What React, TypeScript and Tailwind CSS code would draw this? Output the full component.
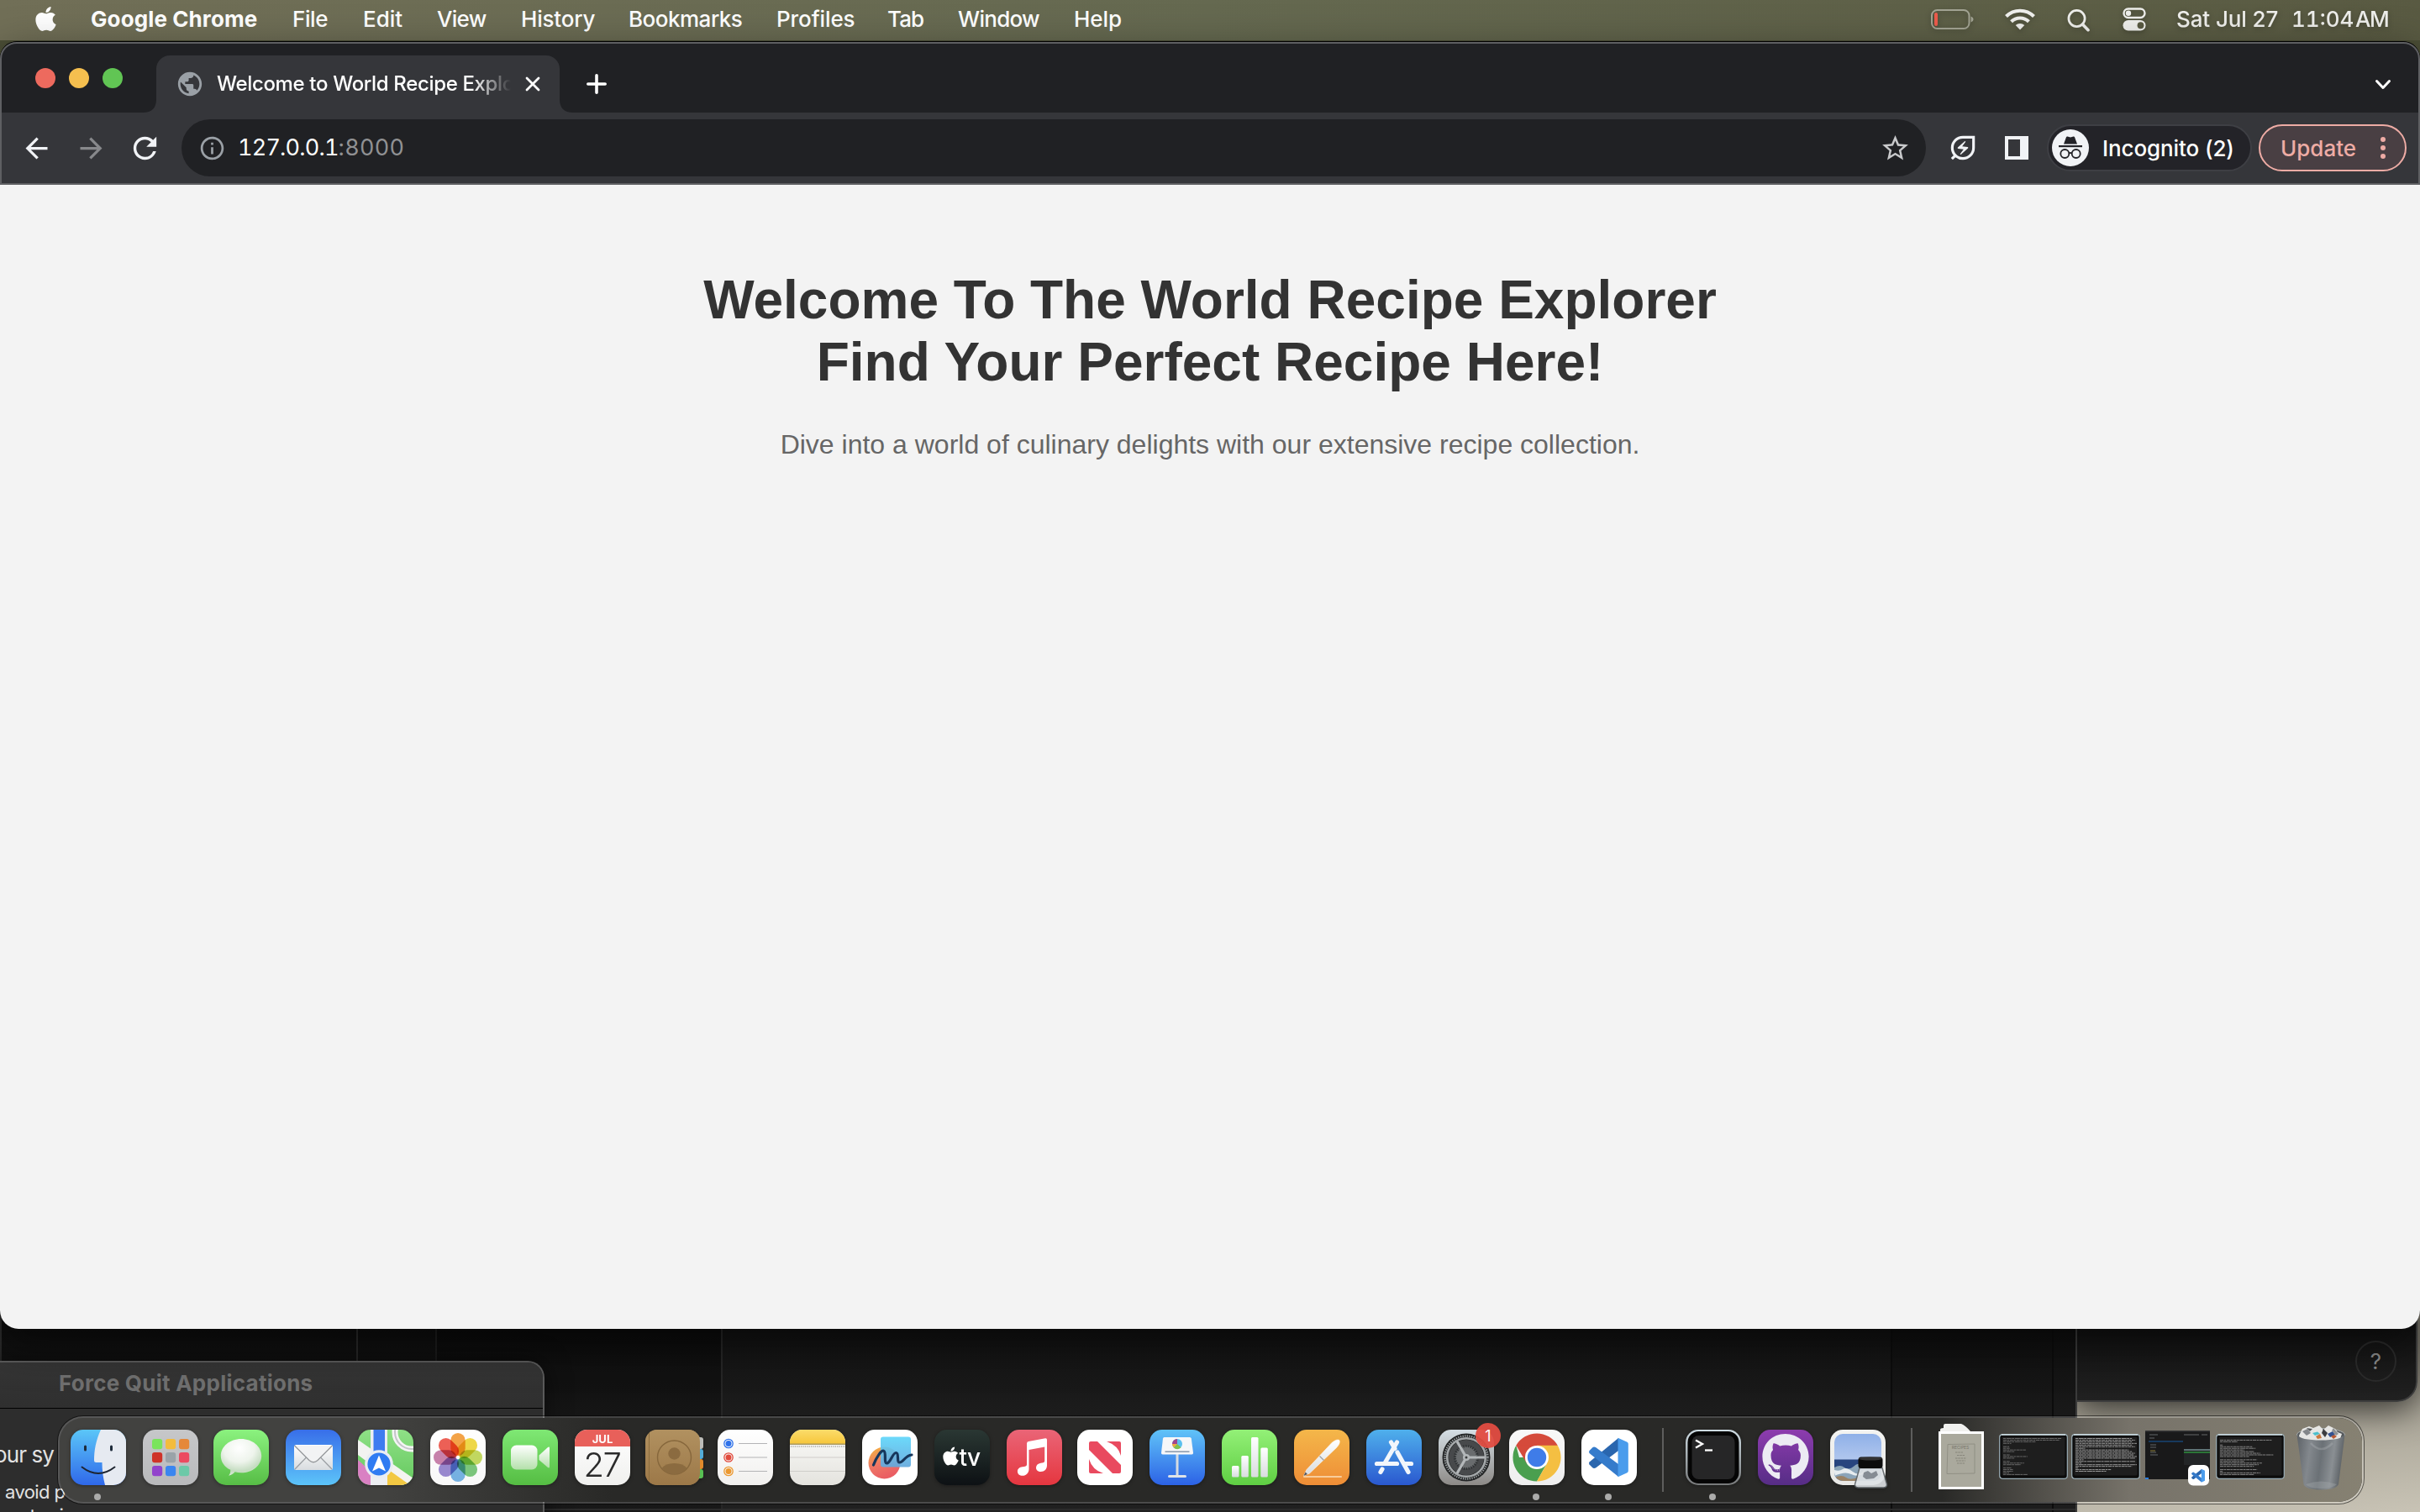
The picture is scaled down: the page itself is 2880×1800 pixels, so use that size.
import React from "react";
import { FaApple, FaGithub } from "react-icons/fa";
import {
  MdArrowBack,
  MdArrowForward,
  MdInfoOutline,
  MdOutlineEnergySavingsLeaf,
  MdPublic,
  MdRefresh,
  MdStarOutline,
} from "react-icons/md";

/* ---------- menu bar ---------- */

const menus = [
  { label: "File", cls: "w-[84px] tracking-[-0.4px]" },
  { label: "Edit", cls: "w-[88px] tracking-[0px]" },
  { label: "View", cls: "w-[100px] tracking-[-0.7px]" },
  { label: "History", cls: "w-[128px] tracking-[-0.2px]" },
  { label: "Bookmarks", cls: "w-[176px] tracking-[-0.5px]" },
  { label: "Profiles", cls: "w-[132px] tracking-[-0.1px]" },
  { label: "Tab", cls: "w-[84px] tracking-[-0.9px]" },
  { label: "Window", cls: "w-[138px] tracking-[-0.7px]" },
  { label: "Help", cls: "w-[80px] tracking-[-0.1px]" },
];

function MenuBar() {
  return (
    <div className="flex h-12 shrink-0 items-center bg-linear-to-r from-[#716f57] via-[#656950] to-[#595a42] pb-[3px] text-[26px] font-medium whitespace-nowrap text-white">
      <FaApple className="ml-[38px] size-[33px]" />
      <span className="ml-[37px] w-[240px] font-bold tracking-[0.1px]">Google Chrome</span>
      {menus.map((m) => (
        <span key={m.label} className={m.cls}>
          {m.label}
        </span>
      ))}
      <div className="ml-auto flex items-center text-[#efefec] [filter:drop-shadow(0_2px_3px_rgba(0,0,0,0.25))]">
        <svg className="h-[26px] w-[52px]" viewBox="0 0 52 26" fill="none">
          <rect x="1" y="2" width="44.500" height="22" rx="6.500" stroke="#a3a494" strokeWidth="2" />
          <rect x="4" y="5" width="4" height="16" rx="2" fill="#ee5c4c" />
          <path d="M47.500 9.500c4 1.500 4 5.500 0 7z" fill="#a3a494" />
        </svg>
        <svg className="ml-[36px] h-[26px] w-[36px]" viewBox="0 0 36 26" fill="none" stroke="currentColor" strokeWidth="4.200">
          <path d="M1.500 9.500a23.500 23.500 0 0 1 33 0" />
          <path d="M7.600 15.800a14.700 14.700 0 0 1 20.800 0" />
          <path d="M18 25.500l-5.300-5.400a7.500 7.500 0 0 1 10.600 0z" fill="currentColor" stroke="none" />
        </svg>
        <svg className="ml-[38px] h-[28px] w-[28px] translate-y-[1px]" viewBox="0 0 28 28" fill="none" stroke="currentColor">
          <circle cx="11.500" cy="12" r="9.600" strokeWidth="2.700" />
          <path d="M18.500 19l6.500 6.700" strokeWidth="3.600" strokeLinecap="round" />
        </svg>
        <svg className="ml-[38px] h-[28px] w-[28px]" viewBox="0 0 28 28" fill="none">
          <rect x="1.500" y="1.500" width="25" height="10.500" rx="5.250" stroke="currentColor" strokeWidth="2.400" />
          <circle cx="7" cy="6.750" r="3.200" fill="currentColor" />
          <rect x="0.500" y="15" width="27" height="12.500" rx="6.250" fill="currentColor" />
          <circle cx="21.500" cy="21.250" r="3.900" fill="#595a42" />
        </svg>
        <span className="ml-[36px] w-[137px] tracking-[-0.100px]">Sat Jul 27</span>
        <span className="w-[76px] tracking-[0px] tabular-nums">11:04</span>
        <span className="w-[77px] tracking-[-1.500px]">AM</span>
      </div>
    </div>
  );
}

/* ---------- browser window ---------- */

function IncognitoBadge() {
  return (
    <svg className="size-[44px]" viewBox="0 0 44 44">
      <circle cx="22" cy="22" r="22" fill="#f1f3f6" />
      <path d="M14 17.500l3-8.200q.4-1 1.500-.7l3.500.9 3.500-.9q1.100-.3 1.500.7l3 8.200z" fill="#232328" />
      <rect x="8" y="19" width="28" height="2.200" fill="#232328" />
      <g fill="none" stroke="#232328" strokeWidth="1.800">
        <circle cx="15.300" cy="29" r="5" />
        <circle cx="28.700" cy="29" r="5" />
        <path d="M20.300 28.600q1.700-1.200 3.400 0" />
      </g>
    </svg>
  );
}

function TabStrip() {
  return (
    <div className="flex h-[82px] items-end rounded-t-[18px] bg-[#202124]">
      <div className="mb-[29px] ml-[40px] flex gap-4">
        <span className="size-6 rounded-full bg-[#ed6a5e]" />
        <span className="size-6 rounded-full bg-[#f5bf4f]" />
        <span className="size-6 rounded-full bg-[#61c554]" />
      </div>
      <svg className="ml-[24px] h-4 w-4" viewBox="0 0 16 16">
        <path d="M16 0v16H0Q16 16 16 0z" fill="#35363a" />
      </svg>
      <div className="flex h-[68px] w-[480px] items-center rounded-t-[16px] bg-[#35363a] pl-[23px] text-white">
        <MdPublic className="size-[34px] text-[#9aa0a6]" />
        <span className="ml-[15px] w-[352px] overflow-hidden text-[24px] font-medium tracking-[-0.350px] whitespace-nowrap [mask-image:linear-gradient(to_right,black_305px,transparent_350px)]">
          Welcome to World Recipe Explorer
        </span>
        <svg className="ml-[15px] size-[18px]" viewBox="0 0 18 18" stroke="currentColor" strokeWidth="2.800" strokeLinecap="round">
          <path d="M2 2l14 14M16 2L2 16" />
        </svg>
      </div>
      <svg className="h-4 w-4" viewBox="0 0 16 16">
        <path d="M0 0v16h16Q0 16 0 0z" fill="#35363a" />
      </svg>
      <svg className="mb-[22px] ml-[16px] size-6" viewBox="0 0 24 24" stroke="white" strokeWidth="3.600" strokeLinecap="round">
        <path d="M12 1.800v20.400M1.800 12h20.400" />
      </svg>
      <svg className="mr-[32px] mb-[27px] ml-auto h-[13px] w-[20px]" viewBox="0 0 20 13" fill="none" stroke="white" strokeWidth="3" strokeLinecap="round" strokeLinejoin="round">
        <path d="M2.500 2.500l7.500 8 7.500-8" />
      </svg>
    </div>
  );
}

function Toolbar() {
  return (
    <div className="flex h-[84px] items-center bg-[#35363a] text-white">
      <MdArrowBack className="ml-[22px] size-[39px] text-[#f1f3f6]" />
      <MdArrowForward className="ml-[26px] size-[39px] text-[#87888b]" />
      <MdRefresh className="ml-[24px] size-[41px] text-[#f1f3f6]" />
      <div className="ml-[23px] flex h-[68px] w-[2076px] items-center rounded-full bg-[#202124]">
        <MdInfoOutline className="ml-[20px] size-[33px] text-[#9aa0a6]" />
        <span className="ml-[14px] flex items-baseline text-[27px] tabular-nums">
          <span className="tracking-[-0.800px]">127.0.0.1</span>
          <span className="tracking-[0.300px] text-[#909193]">:8000</span>
        </span>
        <MdStarOutline className="mr-[18px] ml-auto size-[37px] text-[#c8c9cb]" />
      </div>
      <MdOutlineEnergySavingsLeaf className="ml-[25px] size-[38px] text-[#f1f3f6]" />
      <svg className="ml-[31px] size-[28px]" viewBox="0 0 28 28">
        <path fill="#f1f3f6" fillRule="evenodd" d="M0 0h28v28H0zM4 4v20h14V4z" />
      </svg>
      <div className="ml-[22px] flex h-[56px] w-[244px] items-center rounded-full border-2 border-[#3e3f44] bg-[#232328] pl-[4px] text-[26px] font-medium">
        <IncognitoBadge />
        <span className="ml-[16px] tracking-[-0.100px] whitespace-nowrap">Incognito (2)</span>
      </div>
      <div className="ml-[8px] flex h-[56px] w-[176px] items-center rounded-full border-2 border-[#eeaca5] bg-[#493f43] pl-[24px] text-[26px] font-medium text-[#eeaca5]">
        <span>Update</span>
        <span className="ml-auto flex flex-col gap-[4px] pr-[23px]">
          <i className="size-[6px] rounded-full bg-[#eeaca5]" />
          <i className="size-[6px] rounded-full bg-[#eeaca5]" />
          <i className="size-[6px] rounded-full bg-[#eeaca5]" />
        </span>
      </div>
    </div>
  );
}

function BrowserWindow() {
  return (
    <div className="relative z-10 flex h-[1533px] shrink-0 flex-col rounded-t-[20px] rounded-b-[22px] border-t border-black bg-black shadow-[0_16px_50px_rgba(0,0,0,0.5)]">
      <div className="rounded-t-[20px] border-2 border-[#5e5f62] bg-[#5e5f62]">
        <TabStrip />
        <Toolbar />
      </div>
      <main className="flex-1 rounded-b-[22px] bg-[#f3f3f3] pt-[100px] text-center font-['Liberation_Sans',Arial,sans-serif]">
        <h1 className="text-[64px] leading-[74px] font-bold text-[#333]">
          Welcome To The World Recipe Explorer
          <br />
          Find Your Perfect Recipe Here!
        </h1>
        <p className="mt-[43px] text-[32px] leading-9 text-[#666]">
          Dive into a world of culinary delights with our extensive recipe collection.
        </p>
      </main>
    </div>
  );
}

/* ---------- windows behind the browser ---------- */

function BackgroundWindows() {
  return (
    <div className="absolute inset-x-0 top-[1560px] h-[240px] bg-linear-to-br from-[#55524a] via-[#8d897c] to-[#c8c3b5]">
      <div className="absolute top-0 left-[2470px] h-[109px] w-[407px] rounded-br-[24px] border-r-2 border-b-2 border-[#3d3d3d] bg-linear-to-b from-[#0e0e0e] to-[#212121] shadow-[0_8px_40px_rgba(0,0,0,0.7)]">
        <div className="absolute top-[36px] right-[23px] flex size-[49px] items-center justify-center rounded-full border-2 border-[#2b2b2b] text-[26px] text-[#8a8a8a]">
          ?
        </div>
      </div>
      <div className="absolute inset-y-0 left-0 flex w-[2472px] border-r-2 border-[#3b3b3b] bg-linear-to-b from-[#0c0c0c] via-[#191919] to-[#1d1d1d]">
        <div className="w-[426px] border-r-2 border-l-2 border-[#2c2c2c]" />
        <div className="w-[94px] border-r-2 border-[#1e1e1e]" />
        <div className="w-[340px] border-r-2 border-[#262626] bg-black/15" />
        <div className="w-[1392px] border-r-2 border-[#0c0c0c] bg-white/[0.015]" />
        <div className="w-[192px] border-r-2 border-[#0c0c0c]" />
        <div className="flex-1" />
        <div className="absolute inset-x-0 bottom-[2px] h-[2px] bg-[#2b2b2b]" />
      </div>
      <div className="absolute top-[60px] left-[-20px] flex h-[240px] w-[668px] flex-col rounded-tr-[20px] border-t-2 border-r-2 border-[#5a5a5a] bg-[#2d2d2d] shadow-[0_0_30px_rgba(0,0,0,0.5)]">
        <div className="flex h-[55px] shrink-0 items-center rounded-tr-[18px] border-b border-black bg-linear-to-b from-[#353535] to-[#2f2f2f] pb-[5px] pl-[90px] text-[26px] font-bold tracking-[0.250px] text-[#6f6f6f]">
          Force Quit Applications
        </div>
        <div className="flex flex-col pl-[13px] whitespace-nowrap text-[#e2e2e2]">
          <span className="mt-[39px] text-[26px] leading-8 tracking-[-0.900px]">our sy</span>
          <span className="mt-[14px] pl-[13px] text-[22px] leading-7 tracking-[-0.600px]">avoid p</span>
          <span className="text-[22px] leading-7 tracking-[-0.700px]">e not using</span>
        </div>
      </div>
    </div>
  );
}

/* ---------- dock icons ---------- */

function Tile({
  id,
  from,
  to,
  children,
}: {
  id: string;
  from: string;
  to: string;
  children?: React.ReactNode;
}) {
  return (
    <svg className="size-[66px] shrink-0 overflow-visible [filter:drop-shadow(0_1px_2px_rgba(0,0,0,0.35))]" viewBox="0 0 66 66">
      <defs>
        <linearGradient id={id} x1="0" y1="0" x2="0" y2="1">
          <stop offset="0" stopColor={from} />
          <stop offset="1" stopColor={to} />
        </linearGradient>
        <clipPath id={id + "-clip"}>
          <rect width="66" height="66" rx="15" />
        </clipPath>
        <linearGradient id={id + "-w"} x1="0" y1="0" x2="0" y2="1">
          <stop offset="0" stopColor="#ffffff" />
          <stop offset="1" stopColor="#d8dcdf" />
        </linearGradient>
      </defs>
      <rect width="66" height="66" rx="15" fill={`url(#${id})`} />
      {children}
    </svg>
  );
}

const Finder = () => (
  <Tile id="finder" from="#5bc6f8" to="#2f68ea">
    <path clipPath="url(#finder-clip)" d="M36 0C30 13 28 25 28 36.500Q28 39 30.500 39H37.500Q37.500 53 41 66H66V0z" fill="#e6eaf1" />
    <rect x="16" y="18.500" width="3" height="7" rx="1.500" fill="#1d2b3a" />
    <rect x="47" y="18.500" width="3" height="7" rx="1.500" fill="#1d2b3a" />
    <path d="M13.500 44.500Q33 59.500 52.500 44.500" fill="none" stroke="#1d2430" strokeWidth="2" strokeLinecap="round" />
  </Tile>
);

const launchColors = ["#7ae45c", "#f3bc3c", "#e5883a", "#cf3328", "#9aa3a8", "#ec4b60", "#9243cc", "#3a86f0", "#6cc9a8"];
const Launchpad = () => (
  <Tile id="launch" from="#c6c7c9" to="#b9babc">
    {launchColors.map((c, i) => (
      <rect key={c} x={11 + (i % 3) * 16} y={11 + Math.floor(i / 3) * 16} width="12.200" height="12.200" rx="3" fill={c} />
    ))}
  </Tile>
);

const Messages = () => (
  <Tile id="msg" from="#8bf27f" to="#57bd46">
    <path d="M33 11c13.500 0 24.200 9 24.200 20.200S46.500 51.300 33 51.300c-2.600 0-5-.3-7.400-1-1.600 2-4.400 3.900-7.400 4.400 1.700-1.900 2.300-4.500 2-6.900C13 44.300 8.800 38.200 8.800 31.200 8.800 20 19.500 11 33 11z" fill="url(#msg-r)" />
    <defs>
      <radialGradient id="msg-r" cx="0.450" cy="0.250" r="0.850">
        <stop offset="0" stopColor="#ffffff" />
        <stop offset="0.450" stopColor="#eef4ec" />
        <stop offset="0.750" stopColor="#c4dcc0" />
        <stop offset="1" stopColor="#e8f4e6" />
      </radialGradient>
    </defs>
  </Tile>
);

const Mail = () => (
  <Tile id="mail" from="#386ee9" to="#5cc4f9">
    <rect x="10" y="18" width="46" height="30" rx="2.500" fill="url(#mail-w)" />
    <path d="M11 47l15-15.500M55 47L40 31.500" stroke="#9b9fa3" strokeWidth="1.200" />
    <path d="M10.500 19L28 36.500q5 4.500 10 0L55.500 19" fill="#f2f3f4" stroke="#96999c" strokeWidth="1.300" />
  </Tile>
);

const Maps = () => (
  <Tile id="maps" from="#8fe086" to="#65c95f">
    <g clipPath="url(#maps-clip)">
      <path d="M0 36V66H18V52z" fill="#d981c3" />
      <path d="M0 12L66 58V66H48L0 30z" fill="#f3f3f1" />
      <path d="M34 46L62 66H34z" fill="#f2c843" />
      <rect x="15" y="0" width="20" height="66" fill="#eceef2" />
      <rect x="18.500" y="0" width="13.500" height="34" fill="#3e7cf0" />
      <circle cx="64" cy="3" r="20" fill="none" stroke="#f4f4f4" strokeWidth="7" />
      <circle cx="64" cy="3" r="20" fill="none" stroke="#c2c5c8" strokeWidth="2" />
    </g>
    <circle cx="25" cy="41" r="15.200" fill="#2f7bf2" stroke="#e9edf3" strokeWidth="3.200" />
    <path d="M25 30.500L33 49.500 25 45.500 17 49.500z" fill="#fff" />
  </Tile>
);

const petals = ["#f2962e", "#ecd22f", "#b9d24a", "#69bd6a", "#63a6dd", "#8a78c8", "#c0709f", "#ea4a3e"];
const Photos = () => (
  <Tile id="photos" from="#ffffff" to="#f8f8f8">
    <g className="isolate">
      {petals.map((c, i) => (
        <rect key={c} x="24.300" y="4" width="17.400" height="27" rx="8.700" fill={c} opacity="0.880" transform={`rotate(${i * 45} 33 33)`} className="mix-blend-multiply" />
      ))}
    </g>
    <circle cx="33" cy="33" r="1.500" fill="#fff" />
  </Tile>
);

const FaceTime = () => (
  <Tile id="ft" from="#7fe874" to="#55bd43">
    <rect x="10" y="18.500" width="31.500" height="29" rx="6.500" fill="url(#ft-g)" />
    <path d="M43.500 30.500L54 21q2-1.300 2 1V44q0 2.300-2 1L43.500 36z" fill="url(#ft-g)" />
    <linearGradient id="ft-g" x1="0" y1="0" x2="0" y2="1">
      <stop offset="0" stopColor="#fff" />
      <stop offset="1" stopColor="#b4e0ab" />
    </linearGradient>
  </Tile>
);

const Calendar = () => (
  <Tile id="cal" from="#ffffff" to="#f0f0ee">
    <rect width="66" height="20" fill="#e8605a" clipPath="url(#cal-clip)" />
    <text x="33" y="16" textAnchor="middle" fontSize="13" fontWeight="700" fill="#fff">
      JUL
    </text>
    <text x="32.500" y="55.500" textAnchor="middle" fontSize="40" fontWeight="300" letterSpacing="-1.500" fill="#2b2b2b">
      27
    </text>
  </Tile>
);

const Contacts = () => (
  <Tile id="contacts" from="#b19160" to="#9c7848">
    <rect x="60" y="9" width="9" height="14" rx="3" fill="#bdbdb9" />
    <rect x="60" y="23" width="9" height="12" rx="3" fill="#53acd8" />
    <rect x="60" y="35" width="9" height="12" rx="3" fill="#e08a2c" />
    <rect x="60" y="47" width="9" height="11" rx="3" fill="#58c053" />
    <rect width="65" height="66" rx="14" fill="url(#contacts)" />
    <path d="M4.500 4V62" stroke="#8d6e3f" strokeWidth="1" />
    <g fill="#8b6b40">
      <circle cx="34.500" cy="33" r="20" fill="none" stroke="#86673c" strokeWidth="1.400" />
      <circle cx="34.500" cy="28.500" r="7.200" />
      <path d="M19.500 46q4-6 15-6t15 6q-6 7-15 7t-15-7z" />
    </g>
  </Tile>
);

const Reminders = () => (
  <Tile id="rem" from="#ffffff" to="#f1f0ee">
    {["#2f72ea", "#e14b3d", "#ec982f"].map((c, i) => (
      <g key={c}>
        <circle cx="13" cy={16.5 + i * 16.5} r="5.200" fill="none" stroke={c} strokeWidth="1.300" />
        <circle cx="13" cy={16.5 + i * 16.5} r="3.500" fill={c} />
        <path d={`M25 ${16.5 + i * 16.5}H59`} stroke="#b4b4b6" strokeWidth="1.200" />
      </g>
    ))}
  </Tile>
);

const Notes = () => (
  <Tile id="notes" from="#fbfbf9" to="#e4e3de">
    <g clipPath="url(#notes-clip)">
      <rect width="66" height="17" fill="url(#notes-y)" />
      <rect y="16.500" width="66" height="1.500" fill="#a99a63" />
      <path d="M1 20H66" stroke="#a9a9a7" strokeWidth="1.500" strokeDasharray="1.200 1.200" />
      <path d="M0 33H66M0 49.500H66" stroke="#cfceca" strokeWidth="1.200" />
    </g>
    <linearGradient id="notes-y" x1="0" y1="0" x2="0" y2="1">
      <stop offset="0" stopColor="#fbdc6b" />
      <stop offset="1" stopColor="#f6c63b" />
    </linearGradient>
  </Tile>
);

const Freeform = () => (
  <Tile id="free" from="#ffffff" to="#ffffff">
    <circle cx="26.500" cy="39.500" r="19" fill="url(#free-c)" />
    <rect x="22" y="8.500" width="36" height="36" rx="3" fill="url(#free-b)" opacity="0.920" />
    <path d="M13.500 42C17 33 23 23.500 26 25.500s-.5 14.500 3.500 14.500 7-13 11-12.500 0 11.500 4 11.500c5 0 6-8 14.500-9" fill="none" stroke="#17375c" strokeWidth="3.200" strokeLinecap="round" />
    <linearGradient id="free-c" x1="0" y1="0" x2="0.400" y2="1">
      <stop offset="0" stopColor="#f4b83f" />
      <stop offset="0.600" stopColor="#ee7566" />
      <stop offset="1" stopColor="#ea5e63" />
    </linearGradient>
    <linearGradient id="free-b" x1="0" y1="0" x2="0" y2="1">
      <stop offset="0" stopColor="#5fd6fa" />
      <stop offset="1" stopColor="#62a8dd" />
    </linearGradient>
  </Tile>
);

const AppleTv = () => (
  <Tile id="tv" from="#2a3733" to="#0d1114">
    <FaApple x="7" y="19" size={25} color="#fff" />
    <text x="29.500" y="43" fontSize="28" fontWeight="500" letterSpacing="-0.500" fill="#fff">
      tv
    </text>
  </Tile>
);

const Music = () => (
  <Tile id="music" from="#ea6577" to="#e5363f">
    <path d="M24 16.500q0-2 2-2.400L46 10.300q2-.3 2 1.700V42.500c0 4.500-3 7.500-7.300 7.500-3.400 0-5.700-2-5.700-4.800 0-3 2.300-4.800 5.500-5.400l3-.5q1.700-.4 1.700-2V20.500L26.500 24V47c0 4.500-3.300 7.800-7.600 7.800-3.500 0-6-2-6-5 0-3.200 2.500-5 5.800-5.500l3.300-.5q2-.4 2-2.200z" fill="#fff" />
  </Tile>
);

const News = () => (
  <Tile id="news" from="#ffffff" to="#ffffff">
    <g fill="#e94a5f">
      <path d="M14 16q0-2 2-2H24L52 42v8q0 2-2 2H42L14 24z" />
      <path d="M35 14H50q2 0 2 2V31Q49 19 35 14z" />
      <path d="M14 35V50q0 2 2 2H31Q18 48 14 35z" />
    </g>
  </Tile>
);

const Keynote = () => (
  <Tile id="key" from="#60c3f8" to="#2c62e6">
    <rect x="31.500" y="28" width="3" height="27" fill="#d5dbe2" />
    <rect x="22" y="54" width="22" height="3" rx="1.500" fill="#dfe3e8" />
    <path d="M17.500 9H48q1.500 0 1.800 1.500L52 27.500q.2 2-1.600 2H15.600q-1.800 0-1.600-2L16 10.500q.2-1.500 1.500-1.500z" fill="#f6f7f9" />
    <path d="M18.500 26.200H47.500" stroke="#8e9cae" strokeWidth="1.600" />
    <circle cx="33" cy="17" r="6" fill="#5bc0ef" />
    <path d="M33 17V11A6 6 0 0 0 27 17z" fill="#a0468f" />
    <path d="M33 17H27a6 6 0 0 0 2 4.500z" fill="#f2a93a" />
    <path d="M33 17L29 21.500a6 6 0 0 0 8.500-.2z" fill="#7fc24c" />
  </Tile>
);

const Numbers = () => (
  <Tile id="num" from="#93f077" to="#5fce43">
    <g fill="url(#num-w)">
      <rect x="12" y="43" width="8.500" height="13.500" rx="1.500" />
      <rect x="23.300" y="31" width="8.500" height="25.500" rx="1.500" />
      <rect x="35" y="9" width="8.500" height="47.500" rx="1.500" />
      <rect x="46.300" y="21.500" width="8.500" height="35" rx="1.500" />
    </g>
  </Tile>
);

const Pages = () => (
  <Tile id="pages" from="#f4b74a" to="#ee8d36">
    <path d="M12 56H56" stroke="#f8cd9b" strokeWidth="2" strokeLinecap="round" />
    <path d="M11.500 55L15 47.500 45 15.500Q51 10.500 54 12.500 55.500 16 50.500 21.500L18.500 52z" fill="url(#pages-w)" stroke="#fff" strokeWidth="0.500" />
    <path d="M30.500 31.500l5 5" stroke="#9b9da0" strokeWidth="1.300" />
    <path d="M11.500 55L13.500 50.500 16 53z" fill="#55585c" />
  </Tile>
);

const AppStore = () => (
  <Tile id="store" from="#4fb0ec" to="#2a58cf">
    <g stroke="#f2f6fb" strokeWidth="5.200" strokeLinecap="round">
      <path d="M29.500 15L34 22.500M36.500 15L22.500 39" />
      <path d="M37 27L50 50.500" />
      <path d="M12.500 40.500H36.500M46 40.500H53.500" />
      <path d="M19 47L17 50.500" />
    </g>
  </Tile>
);

const Settings = () => (
  <div className="relative">
    <Tile id="set" from="#d5dfe5" to="#8d8a87">
      <circle cx="33" cy="33" r="28.500" fill="#232526" />
      <circle cx="33" cy="33" r="25.500" fill="none" stroke="#9a9fa1" strokeWidth="2.400" strokeDasharray="1.300 1.370" />
      <circle cx="33" cy="33" r="22.800" fill="none" stroke="#a4a8aa" strokeWidth="2.600" />
      <circle cx="33" cy="33" r="21" fill="#47494b" />
      <circle cx="33" cy="33" r="13.500" fill="#696c6e" />
      <circle cx="33" cy="33" r="13.500" fill="none" stroke="#2f3234" strokeWidth="3" strokeDasharray="1.500 1.330" />
      <g stroke="#b3b7b9" strokeWidth="3.200">
        <path d="M33 33H55M33 33L22 14M33 33L22 52" />
      </g>
      <circle cx="33" cy="33" r="4" fill="#b3b7b9" />
      <circle cx="33" cy="33" r="1.500" fill="#3b3d3f" />
    </Tile>
    <span className="absolute -top-[8px] right-[-8px] flex size-[30px] items-center justify-center rounded-full bg-[#e24c41]/95 text-[18px] text-white">
      1
    </span>
  </div>
);

const Chrome = () => (
  <Tile id="chrome" from="#f8f8f8" to="#eeeeee">
    <path d="M33 33L8.300 18.700A28.500 28.500 0 0 1 57.700 18.700z" fill="#d54a3b" />
    <path d="M33 33H12L8.300 18.700A28.500 28.500 0 0 0 33 61.500L45 40z" fill="#4a9f4f" />
    <path d="M33 33L45.100 40 33 61.500A28.500 28.500 0 0 0 57.700 18.700H33z" fill="#f4bf42" />
    <path d="M8.300 18.700L20.900 40 33 33V18.700z" fill="#d54a3b" />
    <circle cx="33" cy="33" r="14" fill="#fff" />
    <circle cx="33" cy="33" r="11.200" fill="#3f7ce8" />
  </Tile>
);

function CodeMark() {
  return (
    <g>
      <path d="M44 10V25L17 45.500Q14.500 46.500 13 45L9.500 41.500Q8.500 40 9.500 38.500z" fill="#2a66ae" />
      <path d="M44 56V41L17 21Q14.500 20 13 21.500L9.500 25Q8.500 26.500 9.500 28z" fill="#357bcb" />
      <path d="M43.500 9.700L54.500 14.800Q55.800 15.500 55.800 17V49Q55.800 50.500 54.500 51.200L43.500 56.300z" fill="#4a9cec" />
    </g>
  );
}

const Code = () => (
  <Tile id="code" from="#ffffff" to="#ffffff">
    <CodeMark />
  </Tile>
);

const Terminal = () => (
  <Tile id="term" from="#cfdde4" to="#77797a">
    <rect x="2.500" y="2" width="61" height="62" rx="13" fill="#050505" />
    <rect x="7.500" y="7" width="51" height="52" rx="8" fill="#262627" />
    <path d="M12 12.500l8 4.500-8 4.500" fill="none" stroke="#fff" strokeWidth="2.300" />
    <path d="M23 24.500H32" stroke="#fff" strokeWidth="2.300" />
  </Tile>
);

const GitHub = () => (
  <Tile id="gh" from="#8d3cae" to="#562d86">
    <FaGithub x="4.500" y="4" size={57} color="#ecebf3" />
  </Tile>
);

const Preview = () => (
  <Tile id="prev" from="#f3f3f1" to="#e8e8e6">
    <rect x="5" y="5" width="56" height="56" rx="10" fill="url(#prev-sky)" />
    <clipPath id="prev-in">
      <rect x="5" y="5" width="56" height="56" rx="10" />
    </clipPath>
    <g clipPath="url(#prev-in)">
      <rect x="5" y="35.500" width="56" height="26" fill="#27447e" />
      <path d="M5 45q7-4 12 0t12-2 32 3v16H5z" fill="#8ba4b8" />
      <path d="M5 48q6 2 10-1t12 3 14-2v4q-9 5-16 1T5 55z" fill="#e7ecef" />
      <path d="M5 57q9-4 14 0t16-1v6H5z" fill="#9a8265" />
    </g>
    <path d="M35 45.500H62L67.500 65q.5 3.500-4 4H33.500q-4.500-.5-4-4z" fill="#dfe3e6" opacity="0.900" stroke="#5e6468" strokeWidth="1.500" />
    <path d="M40 51l5-2 4 3 6-3 2 5-5 4-9 1-4-3z" fill="#858c94" />
    <rect x="33.500" y="32.500" width="29" height="13.500" rx="3.500" fill="#0c0c0c" />
    <ellipse cx="48" cy="34.500" rx="14" ry="2" fill="#333" />
    <linearGradient id="prev-sky" x1="0" y1="0" x2="0" y2="1">
      <stop offset="0" stopColor="#8fb0e8" />
      <stop offset="0.600" stopColor="#b4c9ee" />
    </linearGradient>
  </Tile>
);

/* ---------- minimised windows, document and trash ---------- */

const RecipesDoc = () => (
  <svg className="h-[79px] w-[54px] shrink-0" viewBox="0 0 54 79">
    <path d="M6 2Q6 0 8 0H27Q32 2 38 9V14H2V7Q2 5 6 5z" fill="#f1f1ef" />
    <rect x="0" y="9" width="54" height="69" fill="#fff" />
    <rect x="3" y="12" width="48" height="63" fill="#aaa99d" />
    <path d="M11 24.500L43 24v35L10 59.500z" fill="none" stroke="#8d8c81" strokeWidth="0.900" />
    <text x="26" y="29.500" textAnchor="middle" fontSize="5" fill="#77766c">
      RECIPES
    </text>
    <path d="M20 34h9M22 37.500h9M20 41h13M21 44h11M22 47h9" stroke="#86857b" strokeWidth="1.200" strokeDasharray="2.500 0.800" />
  </svg>
);

const shortLines = [72, 70, 40, 10, 0, 8, 8, 28, 14, 0, 8, 30, 14, 0, 8, 26, 22, 0, 10, 12, 12, 8, 30];
const longLines = [70, 74, 70, 76, 70, 74, 12, 66, 70, 74, 72, 76, 74, 10, 74, 8, 76, 70, 4, 44, 38];
const mixedLines = [0, 64, 22, 0, 4, 40, 44, 30, 42, 50, 66, 36, 0, 46, 30, 52, 48, 42, 0, 46, 4, 50, 42];

function TerminalThumb({ lines, ink }: { lines: number[]; ink: string }) {
  return (
    <svg className="h-[54px] w-[82px] shrink-0" viewBox="0 0 82 54">
      <rect x="0.700" y="0.700" width="80.600" height="52.600" rx="3.500" fill="#0b0b0b" stroke="#9db0b8" strokeWidth="1.200" />
      <path d="M3 1H79" stroke="#d4e3ea" strokeWidth="1.300" />
      <rect x="3.500" y="3.500" width="75" height="46" rx="1.500" fill="#1e1e1e" />
      {lines.map((w, i) => (
        <path key={i} d={`M5 ${5.5 + i * 1.95}h${w * 0.96}`} stroke={ink} strokeWidth="0.900" strokeDasharray={i % 2 ? "4 0.600 2.500 0.700" : "3 0.700 6 0.500"} />
      ))}
    </svg>
  );
}

const EditorThumb = () => (
  <svg className="h-[68px] w-[78px] shrink-0 translate-y-[3px] overflow-visible" viewBox="0 0 78 68">
    <rect width="77" height="58" fill="#19191a" />
    <rect width="77" height="1.500" fill="#353536" />
    <rect x="4" y="12" width="41" height="2" fill="#17395d" />
    <path d="M5 5h10M5 9h6M6 17h7M6 20h7M6 26h7M6 29h9" stroke="#6c6f72" strokeWidth="0.900" />
    <path d="M6 24h6" stroke="#8f8038" strokeWidth="1" />
    <path d="M46 5h18M67 5h7" stroke="#77797b" strokeWidth="0.800" />
    <rect x="46" y="22" width="31" height="19" fill="#232527" />
    <path d="M46 23H77" stroke="#9ac3c6" strokeWidth="1" />
    <path d="M46 26H77" stroke="#2e8a3c" strokeWidth="1.600" />
    <rect x="0" y="56" width="4" height="2" fill="#2d7fe0" />
    <rect x="51" y="41" width="25" height="24.500" rx="6" fill="#fff" />
    <g transform="translate(52 42.500) scale(0.340)">
      <CodeMark />
    </g>
  </svg>
);

const Trash = () => (
  <svg className="h-[78px] w-[60px] shrink-0 translate-y-[1px]" viewBox="0 0 60 78">
    <defs>
      <linearGradient id="trash-body" x1="0" y1="0" x2="1" y2="0.150">
        <stop offset="0" stopColor="#5d6267" />
        <stop offset="0.300" stopColor="#83888d" />
        <stop offset="0.550" stopColor="#6b7176" />
        <stop offset="0.800" stopColor="#8a8f93" />
        <stop offset="1" stopColor="#5d6266" />
      </linearGradient>
    </defs>
    <ellipse cx="30" cy="12" rx="28.500" ry="7.500" fill="#55595c" stroke="#a9adaf" strokeWidth="1" />
    <path d="M4 13L8 5l8-3 5 2 7-3 5 5 6-5 8 4 3 4 5 2-2 6-22 4-26-3z" fill="#e6e6e4" />
    <path d="M8 8l6-3 4 5-5 3z" fill="#83868a" />
    <path d="M13 4l7 1-3 3z" fill="#55585b" />
    <path d="M20 10l6-1.500 3 2.500-6 2z" fill="#4dbfcb" />
    <path d="M24 14l5-3 2 5-5 1z" fill="#c9783f" />
    <path d="M33 5l5 5-3 5-4-5z" fill="#3c3d40" />
    <path d="M38 11l6-3 3 4-6 3z" fill="#35528f" />
    <path d="M45 4l6 7-3 2-5-6z" fill="#8f9294" />
    <path d="M42 14l4-2 3 2-4 3z" fill="#b95b35" />
    <path d="M1.500 12Q6 18.500 30 18.500T58.500 12L51 71Q48 77.500 30 77.500T9.500 71z" fill="url(#trash-body)" />
    <path d="M12 71Q30 64 49 71Q44 76 30 76T12 71z" fill="#a3a8ab" opacity="0.400" />
    <path d="M18 22Q30 36 44 22" fill="none" stroke="#b9bdbf" strokeWidth="2.500" opacity="0.300" />
  </svg>
);

/* ---------- dock ---------- */

const apps: { name: string; Icon: () => React.ReactElement; cls?: string; running?: boolean }[] = [
  { name: "Finder", Icon: Finder, running: true },
  { name: "Launchpad", Icon: Launchpad },
  { name: "Messages", Icon: Messages, cls: "-ml-0.5" },
  { name: "Mail", Icon: Mail },
  { name: "Maps", Icon: Maps },
  { name: "Photos", Icon: Photos },
  { name: "FaceTime", Icon: FaceTime },
  { name: "Calendar", Icon: Calendar },
  { name: "Contacts", Icon: Contacts, cls: "-ml-0.5" },
  { name: "Reminders", Icon: Reminders },
  { name: "Notes", Icon: Notes },
  { name: "Freeform", Icon: Freeform },
  { name: "TV", Icon: AppleTv },
  { name: "Music", Icon: Music },
  { name: "News", Icon: News, cls: "-ml-0.5" },
  { name: "Keynote", Icon: Keynote },
  { name: "Numbers", Icon: Numbers },
  { name: "Pages", Icon: Pages },
  { name: "App Store", Icon: AppStore },
  { name: "Settings", Icon: Settings },
  { name: "Chrome", Icon: Chrome, cls: "-ml-0.5", running: true },
  { name: "Code", Icon: Code, running: true },
];

function DockItem({ children, running, cls = "" }: { children: React.ReactNode; running?: boolean; cls?: string }) {
  return (
    <div className={`relative flex shrink-0 justify-center ${cls}`}>
      {children}
      {running && <span className="absolute top-[76px] size-[8px] -translate-x-px rounded-full bg-[#ababaa]" />}
    </div>
  );
}

function Dock() {
  return (
    <div className="absolute top-[1686px] left-[69px] z-20 flex h-[104px] w-[2744px] items-start rounded-[30px] border-2 border-white/20 bg-linear-to-r from-[#424240] from-[14%] via-[#292927] via-[24%] to-[#292927] to-[82%] bg-clip-padding pt-[14px] pl-[13px] shadow-[0_0_0_1px_rgba(0,0,0,0.55)]">
      <div className="absolute inset-y-0 right-0 w-[500px] rounded-r-[28px] bg-linear-to-r from-transparent via-[#77736a] via-[45%] to-[#868172]" />
      <div className="relative flex gap-5">
        {apps.map(({ name, Icon, cls, running }) => (
          <DockItem key={name} running={running} cls={cls}>
            <Icon />
          </DockItem>
        ))}
      </div>
      <span className="relative -mt-[2px] ml-[30px] h-[76px] w-[2px] bg-white/25" />
      <div className="relative ml-[26px] flex gap-5">
        <DockItem running>
          <Terminal />
        </DockItem>
        <DockItem>
          <GitHub />
        </DockItem>
        <DockItem>
          <Preview />
        </DockItem>
      </div>
      <span className="relative -mt-[2px] ml-[30px] h-[76px] w-[2px] bg-white/25" />
      <div className="relative -mt-[8px] ml-[31px] flex h-[80px] items-center">
        <RecipesDoc />
        <span className="w-[18px]" />
        <TerminalThumb lines={shortLines} ink="#6f6f6f" />
        <span className="w-[4px]" />
        <TerminalThumb lines={longLines} ink="#a5a5a5" />
        <span className="w-[6px]" />
        <EditorThumb />
        <span className="w-[6px]" />
        <TerminalThumb lines={mixedLines} ink="#8d8d8d" />
        <span className="w-[13px]" />
        <Trash />
      </div>
    </div>
  );
}

export default function App() {
  return (
    <div className="relative flex h-[1800px] w-[2880px] flex-col overflow-hidden bg-[#4b4e36] font-[Inter,sans-serif]">
      <BackgroundWindows />
      <div className="relative z-10">
        <MenuBar />
      </div>
      <div className="h-px shrink-0" />
      <BrowserWindow />
      <Dock />
    </div>
  );
}
